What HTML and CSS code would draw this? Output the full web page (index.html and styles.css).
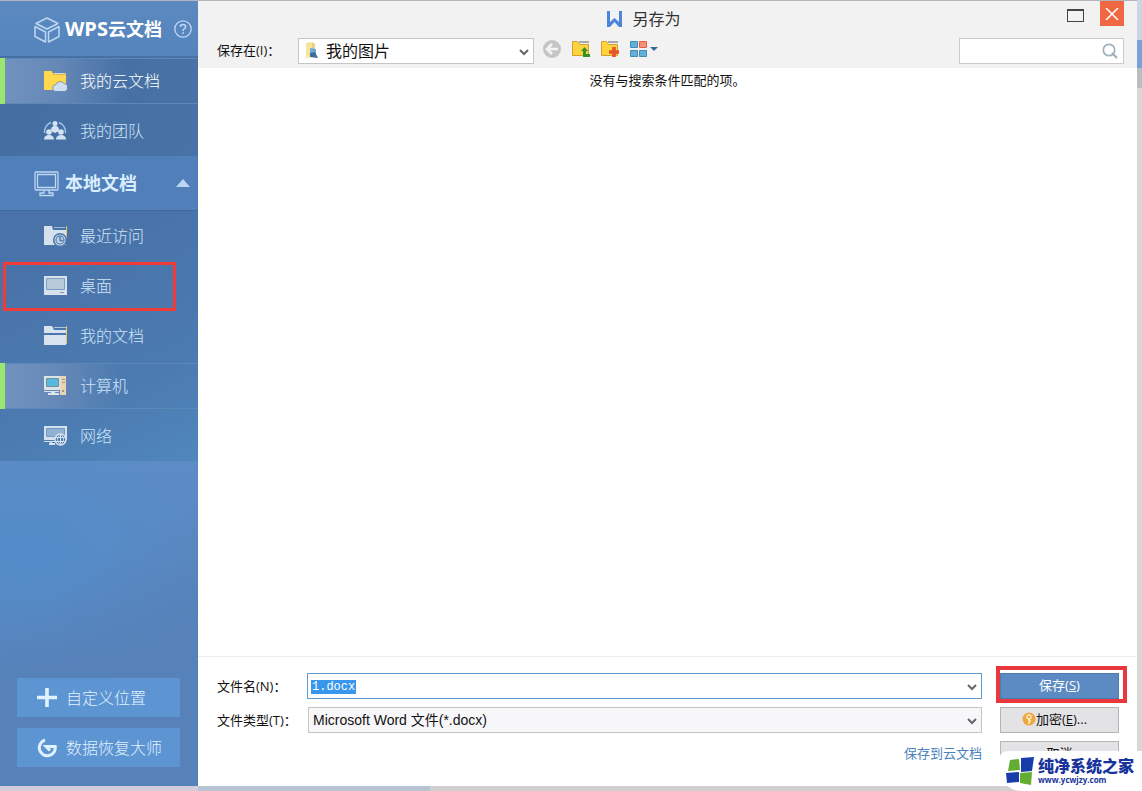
FILE: index.html
```html
<!DOCTYPE html>
<html lang="zh-CN">
<head>
<meta charset="utf-8">
<meta name="viewport" content="width=device-width, initial-scale=1">
<title>另存为</title>
<link rel="stylesheet" href="styles.css">
</head>
<body>
<div class="dialog">
  <nav class="sidebar">
    <div class="section-head cloud-head">
      <svg class="head-icon" width="28" height="28" viewBox="0 0 28 28" fill="none" stroke="currentColor" stroke-width="1.5" stroke-linejoin="round"><path d="M14 3 3 8.500l11 5.500 11-5.500zM2 11.500v10l10.500 5.500V17zM26 11.500v10l-10.500 5.500V17z"/></svg>
      <h2><span class="brand">WPS</span>云文档</h2>
      <button class="help" aria-label="帮助"><svg width="18" height="18" viewBox="0 0 18 18" fill="none" stroke="currentColor" stroke-width="1.3"><circle cx="9" cy="9" r="8.200"/><path d="M6.300 7C6.300 3.500 11.700 3.700 11.700 6.800 11.700 8.700 9 8.700 9 11M9 12.300v1.800" stroke-width="1.600"/></svg></button>
    </div>
    <ul class="places">
      <li><a class="place selected bright" href="#">
        <svg width="24" height="24" viewBox="0 0 24 24"><path fill="#e0b64c" d="M9 4h14v9H9z"/><path fill="#d5d9d8" d="M11 4h11v1H11z"/><path fill="#ffd84d" d="M1 2h8l1 4h13v15H1z"/><path fill="#d0def0" stroke="#466f9e" stroke-width=".6" d="M13 22.500a3.500 3.500 0 0 1 0-7 4.500 4.500 0 0 1 8-1 4 4 0 0 1 0 8z"/></svg>
        我的云文档</a></li>
      <li><a class="place" href="#">
        <svg width="24" height="24" viewBox="0 0 24 24"><path d="M1.500 14A10.500 10.500 0 0 1 8 3.500M16 3.500A10.500 10.500 0 0 1 22.500 14" fill="none" stroke="#a8c7e8" stroke-width="1.500"/><g fill="#d4e3f3"><circle cx="12" cy="4.500" r="2.500"/><path d="M8 12c0-4 1.500-5 4-5s4 1 4 5l-4 2z"/><circle cx="6" cy="13" r="2.800"/><circle cx="18" cy="13" r="2.800"/><path d="M1 20.500c0-3 2-4.500 5-4.500s5 1.500 5 4.500zM13 20.500c0-3 2-4.500 5-4.500s5 1.500 5 4.500z"/></g></svg>
        我的团队</a></li>
    </ul>
    <div class="section-head local-head">
      <svg class="head-icon" width="28" height="28" viewBox="0 0 28 28" fill="none" stroke="currentColor" stroke-width="1.300"><rect x="2" y="3" width="23" height="18" rx="1"/><path d="M4.500 5.500h18v13h-18zM11 21v3H7v2.500h13V24h-4v-3"/></svg>
      <h2>本地文档</h2>
      <button class="fold" aria-label="折叠"><svg width="14" height="8" viewBox="0 0 14 8"><path fill="currentColor" d="M7 0l7 8H0z"/></svg></button>
    </div>
    <ul class="places">
      <li><a class="place" href="#">
        <svg width="24" height="24" viewBox="0 0 24 24"><path fill="#d5e2ee" d="M1 2h8l1 4h13v15H1z"/><path fill="#9ebad8" d="M11 3h11v1H11z"/><path stroke="#e8c65c" d="M23.500 2v14"/><circle cx="17" cy="16" r="6.300" fill="#d5e2ee" stroke="#4b79ad" stroke-width="1.600"/><circle cx="17" cy="16" r="4" fill="#c3d5e6" stroke="#6088b5" stroke-width="1.400"/><path fill="none" stroke="#4b79ad" stroke-width="1.400" d="M17 13v3.500h3"/></svg>
        最近访问</a></li>
      <li class="marked"><a class="place" href="#">
        <svg width="24" height="24" viewBox="0 0 24 24"><path fill="#d7e2ed" d="M1 2h23v19H1z"/><path fill="#b7cada" stroke="#7f9fbe" d="M3.500 4.500h18v11h-18z"/><path stroke="#7899bc" d="M17 18.500h4"/></svg>
        桌面</a></li>
      <li><a class="place" href="#">
        <svg width="24" height="24" viewBox="0 0 24 24"><path fill="#d8e3ef" d="M1 2h8l2 4h12v3H1zM1 11h22v10H1z"/><path fill="#adc5dd" d="M11 3h12v1H11z"/><path stroke="#e8c65c" d="M23.500 2v18"/></svg>
        我的文档</a></li>
      <li><a class="place selected" href="#">
        <svg width="24" height="24" viewBox="0 0 24 24"><path fill="#dbe4e9" d="M1 2h17v14H1z"/><path fill="#56badc" stroke="#70929e" d="M3.500 4.500h12v8h-12z"/><path fill="#e8d5b8" d="M17 2h6v19h-6z"/><path fill="#a9927c" d="M19 5h3v1h-3zM19 8h3v1h-3zM19 16h2v2h-2z"/><path fill="#dbe4e9" d="M1 17h15v1h-4v1h4v2H5v-2h3v-1H1z"/></svg>
        计算机</a></li>
      <li><a class="place" href="#">
        <svg width="24" height="24" viewBox="0 0 24 24"><path fill="#d5e2ee" d="M1 2h23v14H1z"/><path fill="#91b2d2" stroke="#6f98c2" d="M3.500 4.500h18v8h-18z"/><path fill="#d5e2ee" d="M1 17h11v1h-3v1h3v2H6v-2l2-1H1z"/><circle cx="17.500" cy="15.500" r="5.500" fill="#4c7fb3" stroke="#d5e2ee" stroke-width="1.400"/><path fill="none" stroke="#d5e2ee" d="M12 13.500h11M12 17.500h11M17.500 10v11M17.500 10c-4 4-4 7 0 11 4-4 4-7 0-11"/></svg>
        网络</a></li>
    </ul>
    <div class="side-actions">
      <button class="side-button"><svg width="20" height="20" viewBox="0 0 20 20"><path stroke="currentColor" stroke-width="3.600" d="M10 0v19M0 9.500h20"/></svg>自定义位置</button>
      <button class="side-button"><svg width="20" height="20" viewBox="0 0 20 20" fill="none" stroke="currentColor" stroke-width="3"><path d="M8 2A8 8 0 1 0 18.200 8.500H9l4 4"/></svg>数据恢复大师</button>
    </div>
  </nav>

  <main class="content">
    <header class="topbar">
      <div class="titlebar">
        <h1 class="title"><svg width="17" height="17" viewBox="0 0 17 17"><path fill="#4b84da" d="M1 0h3v11l4.500-4L13 11V0h3v16h-3l-4.500-5L4 16H1z"/></svg>另存为</h1>
        <button class="maximize" aria-label="最大化"></button>
        <button class="close" aria-label="关闭"><svg width="14" height="12" viewBox="0 0 14 12"><path stroke="#fff" stroke-width="1.500" d="M1 0l12 12M13 0L1 12"/></svg></button>
      </div>
      <div class="toolbar">
        <label class="toolbar-label" for="folder">保存在(I)：</label>
        <div class="combo folder-combo">
          <svg class="folder-icon" width="16" height="18" viewBox="0 0 16 18"><path fill="#f6e49d" d="M1 1l6-1v15l-6 1z"/><path fill="#e3d08a" d="M7 0l3 2v13l-3-1z"/><path fill="#6fa9d8" d="M5 6l6 1v7l-6-1z"/><path fill="#396f9a" d="M5 11l5-1 3 6-8-1z"/></svg>
          <select id="folder"><option>我的图片</option></select>
          <svg class="chevron" width="10" height="7" viewBox="0 0 10 7"><path d="M1 1l4 4 4-4"/></svg>
        </div>
        <div class="tools">
          <button aria-label="后退"><svg width="20" height="20" viewBox="0 0 20 20"><circle cx="10" cy="10" r="9" fill="#c5c5c5"/><path d="M16 10H6M10 5l-5 5 5 5" fill="none" stroke="#f5f5f5" stroke-width="2.600"/></svg></button>
          <button aria-label="上一级"><svg width="20" height="20" viewBox="0 0 20 20"><path fill="#aaa" d="M8 2h10v2H8z"/><path fill="#ffd33c" stroke="#d6a030" d="M1.500 2.500h5l2 3h9v11h-16z"/><path fill="none" stroke="#33932b" stroke-width="3" d="M13.500 10v6.500H19"/><path fill="#33932b" d="M10 12l3.500-4 3.500 4z"/></svg></button>
          <button aria-label="新建文件夹"><svg width="20" height="20" viewBox="0 0 20 20"><path fill="#aaa" d="M8 2h10v2H8z"/><path fill="#ffd33c" stroke="#d6a030" d="M1.500 2.500h5l2 3h9v11h-16z"/><path stroke="#e6542b" stroke-width="3.600" d="M14 8v10M9 13h10"/></svg></button>
          <button aria-label="视图"><svg width="30" height="20" viewBox="0 0 30 20"><path fill="#62afd8" stroke="#438cb5" d="M1.500 2.500h7v6h-7zM1.500 11.500h7v6h-7zM10.500 11.500h7v6h-7z"/><path fill="#f58f76" stroke="#e26148" d="M10.500 2.500h7v6h-7z"/><path fill="#336b9c" d="M21 8h8l-4 4z"/></svg></button>
        </div>
        <div class="search">
          <input type="search" aria-label="搜索">
          <svg width="16" height="16" viewBox="0 0 16 16" fill="none" stroke="#9db0bb"><circle cx="7" cy="7" r="5.700" stroke-width="1.700"/><path d="M10 10l5 5" stroke-width="2.200"/></svg>
        </div>
      </div>
    </header>

    <section class="files"><p>没有与搜索条件匹配的项。</p></section>

    <footer class="footer">
      <div class="fields">
        <label for="filename">文件名(N)：</label>
        <div class="combo name-combo">
          <input id="filename" type="text" value="1.docx" spellcheck="false">
          <svg class="chevron" width="10" height="7" viewBox="0 0 10 7"><path d="M1 1l4 4 4-4"/></svg>
        </div>
        <label for="filetype">文件类型(T)：</label>
        <div class="combo type-combo">
          <select id="filetype"><option>Microsoft Word 文件(*.docx)</option></select>
          <svg class="chevron" width="10" height="7" viewBox="0 0 10 7"><path d="M1 1l4 4 4-4"/></svg>
        </div>
        <a class="cloud-link" href="#">保存到云文档</a>
      </div>
      <div class="buttons">
        <div class="save-wrap"><button class="button primary">保存(<u>S</u>)</button></div>
        <button class="button encrypt"><svg width="14" height="14" viewBox="0 0 14 14"><circle cx="7" cy="7" r="6.500" fill="#eea63d"/><path fill="none" stroke="#fff0c8" stroke-width="1.500" d="M7 12V7M7 9h2"/><circle cx="7" cy="5" r="2" fill="none" stroke="#fff0c8" stroke-width="1.300"/></svg>加密(<u>E</u>)...</button>
        <button class="button">取消</button>
      </div>
    </footer>
  </main>
</div>

<aside class="watermark">
  <svg width="30" height="30" viewBox="0 0 30 30"><path fill="#62ad32" d="M5 4l9-1 1 11-12 1z"/><path fill="#183caa" d="M16 2l13-1-2 14-11 1z"/><path fill="#183caa" d="M1 17l13-1v10l-12 1z"/><path fill="#62ad32" d="M15 17l12-1-1 13-11-2z"/></svg>
  <div><strong>纯净系统之家</strong><span>www.ycwjzy.com</span></div>
</aside>
</body>
</html>
```
FILE: styles.css
```css
* {
  box-sizing: border-box;
}

body {
  margin: 0;
  min-height: 100vh;
  padding: 1px 5px 5px 0;
  display: flex;
  position: relative;
  color: #111;
  font: 13px/20px "Open Sans", "Noto Sans CJK SC", sans-serif;
  background:
    linear-gradient(#cbd5e4 40px, #7ba2d8 40px, #7ba2d8 68px, #b9bcc0 68px, #b9bcc0 88px, #d6d8da 88px) right top / 5px 100% no-repeat,
    linear-gradient(90deg, #d1cdda 198px, #b8c4d4 198px, #b8c4d4 430px, #d0d0d0 430px) left bottom / 100% 5px no-repeat,
    #b4b4bc;
}

button, input, select {
  margin: 0;
  padding: 0;
  border: 0;
  border-radius: 0;
  font: inherit;
  color: inherit;
  background: none;
}

button {
  display: flex;
  align-items: center;
  justify-content: center;
}

h1, h2, p, ul {
  margin: 0;
  padding: 0;
}

svg {
  display: block;
  flex: none;
}

.dialog {
  flex: 1;
  display: grid;
  grid-template-columns: 198px 1fr;
  background: #fff;
}

.sidebar {
  display: flex;
  flex-direction: column;
  color: #d4e6f8;
  background:
    linear-gradient(145deg, transparent 68%, #5681b9 84%),
    radial-gradient(ellipse 160px 110px at 30px 550px, #528cc9, transparent),
    linear-gradient(#5b8cc6 460px, #5a8ac4 560px, #5681b9 680px);
}

.section-head {
  display: flex;
  align-items: center;
  gap: 4px;
  height: 55px;
  padding: 0 6px 0 33px;
  color: #bdd7f2;
  background: linear-gradient(#5b8ac0, #5583bd);
}

.local-head {
  background: #507fb9;
  border-bottom: 1px solid #426b9c;
}

.section-head h2 {
  flex: 1;
  color: #fff;
  font-size: 18px;
  line-height: 24px;
}

.brand {
  font-size: 20px;
}

.local-head h2 {
  color: #d9edff;
}

.fold {
  padding: 0 2px;
}

.places {
  list-style: none;
  background: linear-gradient(100deg, #446fa2, #4972a6);
}

.local-head + .places {
  background: linear-gradient(155deg, #4973a8 20%, #4b7bb1 70%, #5087bc);
}

.places li {
  height: 50px;
  padding: 2px 0;
  position: relative;
}

.place {
  display: flex;
  align-items: center;
  gap: 13px;
  height: 46px;
  padding-left: 43px;
  color: #cfe4f9;
  font-size: 16px;
  font-weight: 300;
  text-decoration: none;
}

.place.selected {
  padding-left: 38px;
  border-left: 5px solid #9be66f;
  background: linear-gradient(90deg, #7192bf, #6488b7 28%, transparent 62%);
  box-shadow: inset 0 1px #5d89b9, inset 0 -1px #5d89b9;
}

.place.bright {
  color: #fff;
}

.marked::after {
  content: "";
  position: absolute;
  inset: 1px 22px 0 3px;
  border: 3px solid #f03b38;
}

.side-actions {
  margin-top: auto;
  padding: 0 18px 19px 17px;
  display: grid;
  gap: 11px;
}

.side-button {
  height: 39px;
  padding-left: 20px;
  gap: 9px;
  justify-content: flex-start;
  color: #e0f2ff;
  background: #5d94d2;
  font-size: 16px;
  font-weight: 300;
}

.content {
  display: flex;
  flex-direction: column;
  min-width: 0;
}

.topbar {
  height: 67px;
  padding-right: 13px;
  background: #f2f2f2;
}

.titlebar {
  display: grid;
  grid-template-columns: 1fr auto 1fr 17px 24px;
  column-gap: 16px;
  height: 36px;
  padding-left: 38px;
}

.title {
  grid-column: 2;
  display: flex;
  align-items: center;
  gap: 9px;
  color: #333;
  font-size: 16px;
  font-weight: 400;
}

.maximize {
  grid-column: 4;
  height: 13px;
  margin-top: 8px;
  border: 1px solid #444;
  border-top-width: 2px;
}

.close {
  height: 25px;
  background: #ee6844;
}

.toolbar {
  display: flex;
  align-items: center;
  height: 26px;
}

.toolbar-label {
  width: 100px;
  padding-left: 19px;
}

.combo {
  position: relative;
  height: 26px;
  border: 1px solid #c5c5c5;
  background: #fff;
}

.combo select,
.combo input {
  display: block;
  width: 100%;
  height: 100%;
  appearance: none;
  outline: 0;
}

.chevron {
  position: absolute;
  right: 4px;
  top: 10px;
  fill: none;
  stroke: #666;
  stroke-width: 2;
  pointer-events: none;
}

.folder-combo {
  width: 236px;
  margin-top: 1px;
}

.folder-combo select {
  padding-left: 27px;
  font-size: 16px;
}

.folder-icon {
  position: absolute;
  left: 6px;
  top: 3px;
}

.tools {
  display: flex;
  gap: 9px;
  padding: 0 0 2px 8px;
}

.search {
  display: flex;
  align-items: center;
  width: 165px;
  height: 26px;
  margin: 1px 0 0 auto;
  padding-right: 5px;
  border: 1px solid #ccc;
  background: #fff;
}

.search input {
  flex: 1;
  min-width: 0;
  padding-left: 6px;
  outline: 0;
}

.files {
  flex: 1;
  padding-top: 2px;
  text-align: center;
}

.footer {
  display: grid;
  grid-template-columns: 1fr 119px;
  gap: 18px;
  height: 130px;
  padding: 16px 18px 0 19px;
  border-top: 1px solid #eee;
}

.fields {
  display: grid;
  grid-template-columns: 90px 1fr;
  grid-auto-rows: 26px;
  row-gap: 8px;
  align-items: center;
}

.name-combo {
  border-color: #5e9bcf;
}

.name-combo input {
  padding: 2px 0 0 4px;
  color: #fff;
  font: 12px/14px "Liberation Mono", monospace;
  background: linear-gradient(#3996ed, #3996ed) 3px 6px / 45px 14px no-repeat;
}

.type-combo {
  margin-left: 1px;
  background: #f7f7f9;
}

.type-combo select {
  padding-left: 4px;
  font: 14px/20px "Liberation Sans", "Noto Sans CJK SC", sans-serif;
}

.cloud-link {
  grid-column: 2;
  justify-self: end;
  padding-bottom: 2px;
  color: #4b83bd;
  text-decoration: none;
}

.buttons {
  display: grid;
  grid-auto-rows: 26px;
  row-gap: 8px;
}

.button {
  width: 100%;
  height: 26px;
  padding-bottom: 2px;
  border: 1px solid #b5b5b8;
  background: #e3e3e6;
}

.encrypt {
  padding-right: 10px;
}

.save-wrap {
  position: relative;
}

.save-wrap::after {
  content: "";
  position: absolute;
  inset: -7px -8px -4px -4px;
  border: 4px solid #e8383d;
  pointer-events: none;
}

.primary {
  color: #fff;
  border-color: #4c7db0;
  background: #5b8bc2;
}

.watermark {
  position: absolute;
  right: 0;
  bottom: 0;
  display: flex;
  align-items: center;
  gap: 3px;
  width: 144px;
  height: 40px;
  padding-left: 7px;
  border-radius: 10px 0 0 24px;
  color: #18349c;
  background: #fff;
}

.watermark strong,
.watermark span {
  display: block;
}

.watermark strong {
  font-size: 16px;
  font-weight: 900;
  line-height: 18px;
  white-space: nowrap;
}

.watermark span {
  font-size: 8px;
  font-weight: 700;
  line-height: 10px;
}
```
